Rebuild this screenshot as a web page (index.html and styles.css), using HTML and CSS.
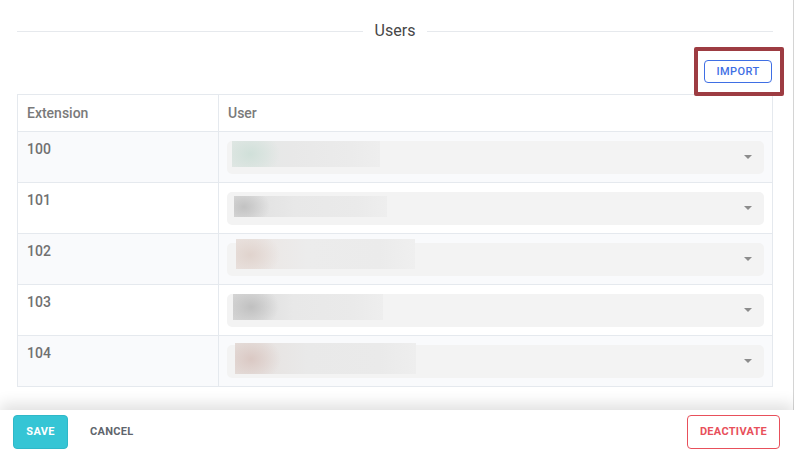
FILE: index.html
```html
<!DOCTYPE html>
<html lang="en">
<head>
    <meta charset="UTF-8">
    <title>Users</title>
    <link rel="stylesheet" href="styles.css">
</head>
<body>

    <div class="content">
        <div class="section-title">
            <span class="line"></span>
            <span class="title">Users</span>
            <span class="line"></span>
        </div>

        <div class="actions">
            <button class="btn-outline import">IMPORT</button>
            <div class="highlight"></div>
        </div>

        <table class="users-table">
            <thead>
                <tr>
                    <th class="col-ext">Extension</th>
                    <th>User</th>
                </tr>
            </thead>
            <tbody>
                <tr>
                    <td class="ext">100</td>
                    <td><div class="select"><div class="blur blur-1"></div><span class="arrow"></span></div></td>
                </tr>
                <tr>
                    <td class="ext">101</td>
                    <td><div class="select"><div class="blur blur-2"></div><span class="arrow"></span></div></td>
                </tr>
                <tr>
                    <td class="ext">102</td>
                    <td><div class="select"><div class="blur blur-3"></div><span class="arrow"></span></div></td>
                </tr>
                <tr>
                    <td class="ext">103</td>
                    <td><div class="select"><div class="blur blur-4"></div><span class="arrow"></span></div></td>
                </tr>
                <tr>
                    <td class="ext">104</td>
                    <td><div class="select"><div class="blur blur-5"></div><span class="arrow"></span></div></td>
                </tr>
            </tbody>
        </table>
    </div>

    <div class="footer">
        <button class="btn-save">SAVE</button>
        <button class="btn-text">CANCEL</button>
        <span class="spacer"></span>
        <button class="btn-danger">DEACTIVATE</button>
    </div>

</body>
</html>
```

FILE: styles.css
```css
body {
    margin: 0;
    width: 794px;
    height: 457px;
    overflow: hidden;
    font-family: Roboto, "Liberation Sans", sans-serif;
    background: white;
}

.content {
    box-sizing: border-box;
    width: 794px;
    height: 410px;
    padding: 20px 20px 0 17px;
    border-right: 1px solid #d4d4d4;
}

.section-title {
    display: flex;
    align-items: center;
    gap: 12px;
    height: 20px;
}

.section-title .line {
    flex: 1;
    height: 1px;
    background: #e6e9ed;
    margin-top: 2px;
}

.section-title .title {
    font-size: 16px;
    color: #474747;
}

.actions {
    position: relative;
    display: flex;
    justify-content: flex-end;
    margin-top: 20px;
    margin-bottom: 11px;
}

.btn-outline {
    font-family: inherit;
    height: 23px;
    width: 68px;
    padding: 0;
    background: white;
    border: 1px solid #3f6fe4;
    border-radius: 4px;
    color: #3f6fe4;
    font-size: 11px;
    font-weight: 500;
    letter-spacing: 0.4px;
    margin-right: 1px;
}

.highlight {
    position: absolute;
    right: -11px;
    top: -13px;
    width: 82px;
    height: 41px;
    border: 4px solid #9d3c42;
    border-radius: 2px;
}

.users-table {
    width: 756px;
    border-collapse: collapse;
    border: 1px solid #e5e9ee;
}

.users-table th,
.users-table td {
    border: 1px solid #e5e9ee;
    text-align: left;
    vertical-align: top;
}

.users-table th {
    height: 36px;
    padding: 0 9px;
    font-size: 14px;
    font-weight: 500;
    color: #7a7a7a;
    vertical-align: middle;
}

.col-ext {
    width: 182px;
}

.users-table tbody tr:nth-child(odd) {
    background: #f9fafc;
}

.users-table td {
    height: 50px;
    padding: 0 8px;
    box-sizing: border-box;
}

.users-table td.ext {
    padding: 9px 9px 0;
    font-size: 14px;
    font-weight: 500;
    color: #707070;
}

.select {
    position: relative;
    margin: 9px 0 8px;
    height: 33px;
    background: #f3f3f3;
    border-radius: 5px;
}

.arrow {
    position: absolute;
    right: 12px;
    top: 14px;
    width: 0;
    height: 0;
    border-left: 4px solid transparent;
    border-right: 4px solid transparent;
    border-top: 4px solid #8c8c8c;
}

.blur {
    position: absolute;
}

.blur-1 {
    left: 5px;
    top: 0;
    width: 148px;
    height: 26px;
    background: radial-gradient(ellipse 30px 24px at 18px 13px, #d0e0d9, rgba(232,232,232,0)),
        linear-gradient(90deg, #e3e8e6, #e8e8e8 40%, #ebebeb 80%, #eeeeee);
}

.blur-2 {
    left: 7px;
    top: 4px;
    width: 153px;
    height: 21px;
    background: radial-gradient(ellipse 26px 20px at 10px 11px, #c2c2c2, rgba(232,232,232,0)),
        linear-gradient(90deg, #dedede, #e8e8e8 40%, #eaeaea 80%, #eeeeee);
}

.blur-3 {
    left: 9px;
    top: -4px;
    width: 179px;
    height: 30px;
    background: radial-gradient(ellipse 30px 24px at 14px 16px, #e0d3cd, rgba(236,236,236,0)),
        linear-gradient(90deg, #ebe4e1, #ececec 40%, #ebebeb 80%, #efefef);
}

.blur-4 {
    left: 6px;
    top: 0;
    width: 150px;
    height: 26px;
    background: radial-gradient(ellipse 28px 22px at 18px 13px, #c0c0c0, rgba(232,232,232,0)),
        linear-gradient(90deg, #d8d8d8, #e8e8e8 40%, #eaeaea 80%, #eeeeee);
}

.blur-5 {
    left: 8px;
    top: -2px;
    width: 181px;
    height: 31px;
    background: radial-gradient(ellipse 30px 24px at 16px 16px, #dac8c3, rgba(233,233,233,0)),
        linear-gradient(90deg, #e6dfdc, #e9e9e9 40%, #eaeaea 80%, #eeeeee);
}

.footer {
    position: relative;
    display: flex;
    align-items: center;
    box-sizing: border-box;
    height: 47px;
    padding: 0 14px 4px 13px;
    background: white;
    box-shadow: 0 -6px 14px rgba(0, 0, 0, 0.12);
}

.footer button {
    font-family: inherit;
    font-size: 11px;
    font-weight: 700;
    letter-spacing: 0.3px;
    height: 34px;
    border-radius: 4px;
    cursor: pointer;
}

.btn-save {
    width: 55px;
    background: #35c5d5;
    color: white;
    border: 1px solid #2fb8c8;
}

.btn-text {
    background: none;
    border: none;
    color: #5f666d;
    margin-left: 12px;
    padding: 0 10px;
    font-weight: 500;
}

.spacer {
    flex: 1;
}

.btn-danger {
    width: 93px;
    background: white;
    border: 1px solid #e8505b;
    color: #e8505b;
}
```
